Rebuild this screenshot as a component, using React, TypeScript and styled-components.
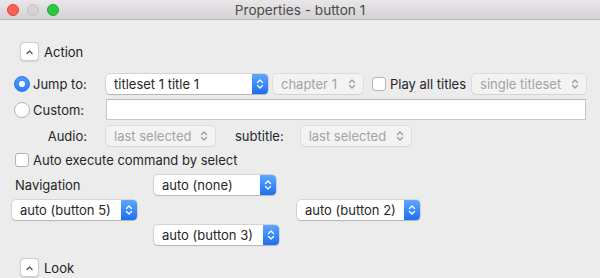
import React from "react";
import styled, { createGlobalStyle, css } from "styled-components";

const Global = createGlobalStyle`
  html, body { margin: 0; padding: 0; background: #ececec; }
  body { font-family: Inter, "Liberation Sans", Arial, sans-serif; font-size: 13px; color: #262626; -webkit-font-smoothing: antialiased; }
  * { box-sizing: border-box; }
`;

const Window = styled.div`
  width: 600px;
  height: 278px;
  background: #ececec;
  overflow: hidden;
  display: flex;
  flex-direction: column;
`;

const TitleBar = styled.div`
  height: 20px;
  flex: none;
  display: flex;
  align-items: center;
  position: relative;
  background: linear-gradient(#e9e7e9, #d4d2d4);
  border-bottom: 1px solid #b9b9b9;
`;

const Lights = styled.div`
  display: flex;
  gap: 8px;
  padding-left: 7px;
`;

const Light = styled.span<{ $c: string; $b: string }>`
  width: 12px;
  height: 12px;
  border-radius: 50%;
  background: ${(p) => p.$c};
  border: 1px solid ${(p) => p.$b};
`;

const Title = styled.div`
  position: absolute;
  left: 0;
  right: 0;
  text-align: center;
  font-size: 13.6px;
  color: #4a4a4a;
  pointer-events: none;
`;

const Content = styled.div`
  display: flex;
  flex-direction: column;
  padding: 0 14px 0 14px;
`;

const Section = styled.div<{ $mt: number }>`
  display: flex;
  align-items: center;
  gap: 5px;
  margin-top: ${(p) => p.$mt}px;
  margin-left: 6px;
  height: 19px;
  font-size: 13px;
  color: #222;
`;

const Disclosure = styled.span`
  width: 19px;
  height: 19px;
  border-radius: 4px;
  background: #fff;
  border: 1px solid #cfcfcf;
  box-shadow: 0 0.5px 1px rgba(0,0,0,0.12);
  display: flex;
  align-items: center;
  justify-content: center;
`;

const Row = styled.div<{ $mt: number; $h: number }>`
  display: flex;
  align-items: center;
  margin-top: ${(p) => p.$mt}px;
  height: ${(p) => p.$h}px;
`;

const LabelCell = styled.div<{ $right?: boolean }>`
  width: 92px;
  flex: none;
  display: flex;
  align-items: center;
  justify-content: ${(p) => (p.$right ? "flex-end" : "flex-start")};
  padding-right: ${(p) => (p.$right ? "19px" : "0")};
  gap: 3px;
`;

const Radio = styled.span<{ $on?: boolean }>`
  width: 16px;
  height: 16px;
  border-radius: 50%;
  flex: none;
  display: flex;
  align-items: center;
  justify-content: center;
  ${(p) =>
    p.$on
      ? css`
          background: linear-gradient(#4c9bfb, #2f7ff2);
          border: 1px solid #2d79e6;
          &::after { content: ""; width: 6px; height: 6px; border-radius: 50%; background: #fff; }
        `
      : css`
          background: #fff;
          border: 1px solid #b5b5b5;
        `}
`;

const Check = styled.span<{ $ml?: number }>`
  width: 14px;
  height: 14px;
  flex: none;
  border-radius: 3px;
  background: #fff;
  border: 1px solid #b3b3b3;
  margin-left: ${(p) => p.$ml ?? 0}px;
`;

const Text = styled.span<{ $ml?: number; $mr?: number }>`
  white-space: nowrap;
  margin-left: ${(p) => p.$ml ?? 0}px;
  margin-right: ${(p) => p.$mr ?? 0}px;
`;

const PopupBox = styled.div<{ $w: number; $disabled?: boolean; $ml?: number }>`
  width: ${(p) => p.$w}px;
  height: 20px;
  flex: none;
  margin-left: ${(p) => p.$ml ?? 0}px;
  display: flex;
  align-items: stretch;
  border-radius: 4px;
  overflow: hidden;
  background: ${(p) => (p.$disabled ? "#f3f3f3" : "#fff")};
  box-shadow: 0 0 0 0.5px rgba(0,0,0,${(p) => (p.$disabled ? 0.12 : 0.2)}), 0 1px 1px rgba(0,0,0,${(p) => (p.$disabled ? 0.05 : 0.15)});
  color: ${(p) => (p.$disabled ? "#a3a3a3" : "#262626")};
`;

const PopupLabel = styled.span`
  flex: 1;
  padding-left: 8px;
  display: flex;
  align-items: center;
  white-space: nowrap;
  overflow: hidden;
`;

const Stepper = styled.span<{ $disabled?: boolean }>`
  width: 16px;
  flex: none;
  display: flex;
  align-items: center;
  justify-content: center;
  margin-right: ${(p) => (p.$disabled ? 3 : 0)}px;
  background: ${(p) => (p.$disabled ? "transparent" : "linear-gradient(#5ea7fd, #1c6ff0)")};
`;

const TextField = styled.div`
  flex: 1;
  height: 21px;
  background: #fff;
  border: 1px solid #c8c8c8;
  border-top-color: #b9b9b9;
`;

const NavGrid = styled.div`
  display: grid;
  grid-template-columns: 142px 143px auto;
  grid-template-rows: 21px 21px 21px;
  row-gap: 4px;
  margin-top: 5px;
  margin-left: -2px;
  align-items: center;
`;

const NavLabel = styled.span`
  padding-left: 3px;
  padding-top: 1px;
`;

const Chevrons = ({ color }: { color: string }) => (
  <svg width="8" height="12" viewBox="0 0 8 12">
    <path d="M1.5 4.5 L4 2 L6.5 4.5 M1.5 7.5 L4 10 L6.5 7.5" fill="none" stroke={color} strokeWidth="1.3" strokeLinecap="round" strokeLinejoin="round" />
  </svg>
);

const Popup = ({ w, label, disabled, ml }: { w: number; label: string; disabled?: boolean; ml?: number }) => (
  <PopupBox $w={w} $disabled={disabled} $ml={ml}>
    <PopupLabel>{label}</PopupLabel>
    <Stepper $disabled={disabled}>
      <Chevrons color={disabled ? "#9a9a9a" : "#fff"} />
    </Stepper>
  </PopupBox>
);

const Caret = () => (
  <svg width="9" height="6" viewBox="0 0 9 6">
    <path d="M2 4.5 L4.5 2 L7 4.5" fill="none" stroke="#555" strokeWidth="1.4" strokeLinecap="round" strokeLinejoin="round" />
  </svg>
);

export default function App() {
  return (
    <Window>
      <Global />
      <TitleBar>
        <Lights>
          <Light $c="#fc5f57" $b="#e0443e" />
          <Light $c="#d6d4d6" $b="#c4c2c4" />
          <Light $c="#2ac940" $b="#1eaa2d" />
        </Lights>
        <Title>Properties - button 1</Title>
      </TitleBar>
      <Content>
        <Section $mt={22}>
          <Disclosure><Caret /></Disclosure>
          <span>Action</span>
        </Section>
        <Row $mt={13} $h={20}>
          <LabelCell>
            <Radio $on />
            <span>Jump to:</span>
          </LabelCell>
          <Popup w={162} label="titleset 1 title 1" />
          <Popup w={90} label="chapter 1" disabled ml={5} />
          <Check $ml={9} />
          <Text $ml={4}>Play all titles</Text>
          <Popup w={114} label="single titleset" disabled ml={6} />
        </Row>
        <Row $mt={5} $h={21}>
          <LabelCell>
            <Radio />
            <span>Custom:</span>
          </LabelCell>
          <TextField />
        </Row>
        <Row $mt={6} $h={20}>
          <LabelCell $right>
            <span>Audio:</span>
          </LabelCell>
          <Popup w={109} label="last selected" disabled />
          <Text $ml={20}>subtitle:</Text>
          <Popup w={110} label="last selected" disabled ml={17} />
        </Row>
        <Row $mt={4} $h={19}>
          <Check $ml={1} />
          <Text $ml={4}>Auto execute command by select</Text>
        </Row>
        <NavGrid>
          <NavLabel>Navigation</NavLabel>
          <Popup w={122} label="auto (none)" />
          <span />
          <Popup w={125} label="auto (button 5)" />
          <span />
          <Popup w={123} label="auto (button 2)" />
          <span />
          <Popup w={125} label="auto (button 3)" />
          <span />
        </NavGrid>
        <Section $mt={13}>
          <Disclosure><Caret /></Disclosure>
          <span>Look</span>
        </Section>
      </Content>
    </Window>
  );
}
